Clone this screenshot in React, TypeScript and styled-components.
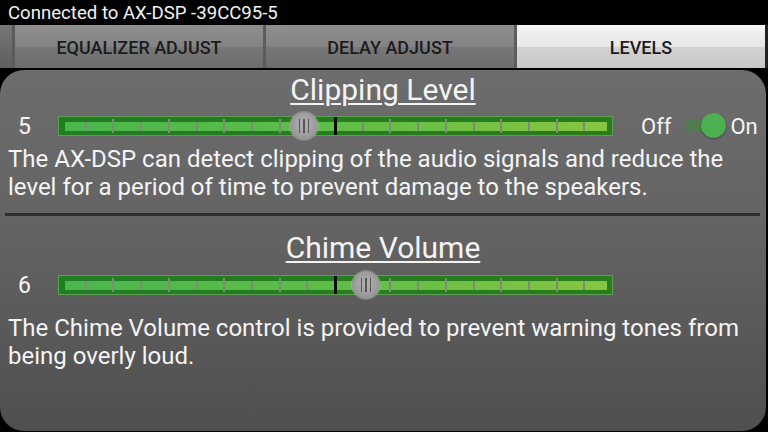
import React from "react";
import styled, { createGlobalStyle } from "styled-components";

const GlobalStyle = createGlobalStyle`
  html, body {
    margin: 0;
    padding: 0;
    background: #000;
  }
  body {
    font-family: Roboto, "Noto Sans", sans-serif;
  }
`;

const Screen = styled.div`
  width: 768px;
  height: 432px;
  display: flex;
  flex-direction: column;
  background: #000;
  overflow: hidden;
`;

const StatusBar = styled.div`
  height: 25px;
  box-sizing: border-box;
  padding: 1px 0 0 8px;
  color: #f2f2f2;
  font-size: 18.6px;
  line-height: 24px;
  white-space: nowrap;
`;

const TabBar = styled.div`
  height: 43px;
  display: flex;
  background: linear-gradient(#8c8c8c, #7a7a7a 60%, #6a6a6a);
`;

const TabStub = styled.div`
  width: 12px;
  background: linear-gradient(#777, #5e5e5e);
  border-right: 3px solid #5a5a5a;
`;

const Tab = styled.div<{ $active?: boolean }>`
  flex: 1;
  display: flex;
  align-items: center;
  justify-content: center;
  font-size: 18px;
  font-weight: 500;
  color: #1c1c1c;
  padding-top: 2px;
  box-sizing: border-box;
  white-space: nowrap;
  border-right: 3px solid ${(p) => (p.$active ? "#222" : "#5c5c5c")};
  background: ${(p) =>
    p.$active
      ? "linear-gradient(#f4f4f4, #e6e6e6 50%, #d2d2d2 52%, #c8c8c8)"
      : "linear-gradient(#8e8e8e, #838383 50%, #777 52%, #6c6c6c)"};
`;

const Panel = styled.div`
  flex: 1;
  margin: 2px 2px 1px 0;
  border-radius: 24px;
  background: linear-gradient(#6d6d6d, #636363 45%, #4f4f4f);
  padding: 4px 0 0 0;
  display: flex;
  flex-direction: column;
  color: #fff;
`;

const Title = styled.div`
  align-self: center;
  font-size: 30px;
  line-height: 32px;
  text-decoration: underline;
  text-decoration-thickness: 2px;
  text-underline-offset: 3px;
  color: #f4f4f4;
`;

const Row = styled.div<{ $gap: number }>`
  display: flex;
  align-items: center;
  height: 28px;
  margin-top: ${(p) => p.$gap}px;
`;

const ValueLabel = styled.div`
  width: 40px;
  padding-left: 18px;
  font-size: 23px;
  color: #f4f4f4;
`;

const Track = styled.div`
  position: relative;
  width: 553px;
  height: 18px;
  border: 1px solid #5f9c55;
  background: linear-gradient(to right, #207e22, #2a7c1c);
`;

const InnerBar = styled.div`
  position: absolute;
  left: 6px;
  right: 5px;
  top: 5px;
  height: 9px;
  background: linear-gradient(to right, #4bb64d, #5fbd48 50%, #86c540);
`;

const Tick = styled.div<{ $long?: boolean }>`
  position: absolute;
  width: 2px;
  top: ${(p) => (p.$long ? 2 : 5)}px;
  height: ${(p) => (p.$long ? 14 : 9)}px;
  background: #7d8c76;
`;

const Marker = styled.div`
  position: absolute;
  width: 3px;
  top: 0;
  height: 18px;
  background: #0a0a0a;
`;

const Thumb = styled.div`
  position: absolute;
  top: -5px;
  width: 28px;
  height: 28px;
  border-radius: 50%;
  background: radial-gradient(circle at 50% 45%, #b4b4b4, #9a9a9a 60%, #858585);
  box-shadow: 0 0 0 1px rgba(200, 200, 200, 0.35);
  display: flex;
  align-items: center;
  justify-content: center;
  gap: 3px;
`;

const Grip = styled.span`
  width: 1.5px;
  height: 14px;
  background: #555;
`;

const ToggleGroup = styled.div`
  display: flex;
  align-items: center;
  margin-left: 28px;
  font-size: 22px;
  color: #f4f4f4;
`;

const Switch = styled.div`
  position: relative;
  width: 42px;
  height: 26px;
  margin: 0 4px 0 13px;
`;

const SwitchTrack = styled.div`
  position: absolute;
  left: 1px;
  top: 7px;
  width: 32px;
  height: 12px;
  border-radius: 6px;
  background: #4f7d4f;
`;

const SwitchKnob = styled.div`
  position: absolute;
  right: 0;
  top: 0;
  width: 25px;
  height: 25px;
  border-radius: 50%;
  background: #4caf50;
  box-shadow: 0 1px 2px rgba(0, 0, 0, 0.35);
`;

const Description = styled.p<{ $gap: number }>`
  margin: ${(p) => p.$gap}px 0 0 0;
  padding: 0 8px;
  font-size: 24px;
  line-height: 28px;
  color: #f4f4f4;
  white-space: nowrap;
`;

const Divider = styled.div`
  height: 3px;
  margin: 12px 6px 16px 5px;
  background: #2e2e2e;
`;

const STEP = 27.7;
const TRACK = 554;

const LevelSlider: React.FC<{ value: number }> = ({ value }) => {
  const pos = ((value - 1) / 9) * TRACK;
  const ticks = Array.from({ length: 19 }, (_, i) => i + 1).filter((k) => k !== 10);
  return (
    <Track>
      <InnerBar />
      {ticks.map((k) => (
        <Tick key={k} $long={k % 2 === 0} style={{ left: k * STEP - 2 }} />
      ))}
      <Marker style={{ left: 10 * STEP - 2 }} />
      <Thumb style={{ left: pos - 15 }}>
        <Grip />
        <Grip />
        <Grip />
      </Thumb>
    </Track>
  );
};

const App: React.FC = () => {
  return (
    <Screen>
      <GlobalStyle />
      <StatusBar>Connected to AX-DSP -39CC95-5</StatusBar>
      <TabBar>
        <TabStub />
        <Tab>EQUALIZER ADJUST</Tab>
        <Tab>DELAY ADJUST</Tab>
        <Tab $active>LEVELS</Tab>
      </TabBar>
      <Panel>
        <Title>Clipping Level</Title>
        <Row $gap={6}>
          <ValueLabel>5</ValueLabel>
          <LevelSlider value={5} />
          <ToggleGroup>
            Off
            <Switch>
              <SwitchTrack />
              <SwitchKnob />
            </Switch>
            On
          </ToggleGroup>
        </Row>
        <Description $gap={5}>
          The AX-DSP can detect clipping of the audio signals and reduce the
          <br />
          level for a period of time to prevent damage to the speakers.
        </Description>
        <Divider />
        <Title>Chime Volume</Title>
        <Row $gap={7}>
          <ValueLabel>6</ValueLabel>
          <LevelSlider value={6} />
        </Row>
        <Description $gap={15}>
          The Chime Volume control is provided to prevent warning tones from
          <br />
          being overly loud.
        </Description>
      </Panel>
    </Screen>
  );
};

export default App;
